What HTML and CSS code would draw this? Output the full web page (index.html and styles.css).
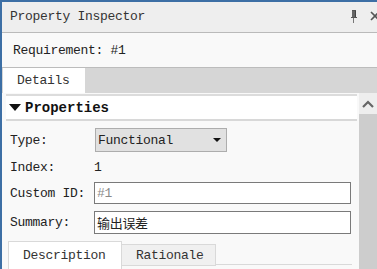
FILE: index.html
```html
<!DOCTYPE html>
<html lang="zh-CN">
<head>
    <meta charset="UTF-8">
    <title>Property Inspector</title>
    <link rel="stylesheet" href="styles.css">
</head>
<body>
    <div class="panel">
        <div class="title-bar">
            <span class="title">Property Inspector</span>
            <div class="title-tools">
                <svg class="pin" width="8" height="13" viewBox="0 0 8 13">
                    <rect x="2" y="0" width="4" height="1" fill="#555"/>
                    <rect x="2" y="1" width="3" height="6" fill="#666"/>
                    <rect x="5" y="1" width="1" height="6" fill="#444"/>
                    <rect x="1" y="7" width="6" height="1" fill="#555"/>
                    <rect x="3" y="8" width="1" height="5" fill="#777"/>
                </svg>
                <svg class="close" width="10" height="10" viewBox="0 0 10 10">
                    <path d="M1 1 L9 9 M9 1 L1 9" stroke="#555" stroke-width="1.6"/>
                </svg>
            </div>
        </div>
        <div class="req-row">Requirement: #1</div>
        <div class="tab-bar">
            <div class="tab active">Details</div>
        </div>
        <div class="body">
            <div class="main">
                <div class="section-head">
                    <span class="caret"></span>
                    <span>Properties</span>
                </div>
                <div class="form">
                    <div class="row row-type">
                        <label>Type:</label>
                        <div class="select">
                            <span>Functional</span>
                            <span class="arrow"></span>
                        </div>
                    </div>
                    <div class="row row-index">
                        <label>Index:</label>
                        <span class="value">1</span>
                    </div>
                    <div class="row row-id">
                        <label>Custom ID:</label>
                        <input class="field" type="text" placeholder="#1">
                    </div>
                    <div class="row row-summary">
                        <label>Summary:</label>
                        <input class="field" type="text" value="输出误差">
                    </div>
                </div>
                <div class="sub-tabs">
                    <div class="sub-tab active">Description</div>
                    <div class="sub-tab">Rationale</div>
                    <div class="sub-fill"></div>
                </div>
            </div>
            <div class="scrollbar">
                <div class="scroll-btn">
                    <svg width="12" height="8" viewBox="0 0 12 8">
                        <path d="M1 7 L6 2 L11 7" stroke="#666" stroke-width="2.2" fill="none"/>
                    </svg>
                </div>
                <div class="scroll-track"></div>
            </div>
        </div>
    </div>
</body>
</html>
```

FILE: styles.css
```css
* {
    margin: 0;
    padding: 0;
    box-sizing: border-box;
}

body {
    width: 377px;
    height: 269px;
    overflow: hidden;
    background: #f9f9f9;
    font-family: 'Liberation Mono', 'Noto Sans CJK SC', monospace;
    font-size: 13px;
    letter-spacing: -0.3px;
    color: #222;
}

.panel {
    height: 269px;
    display: flex;
    flex-direction: column;
    border-top: 2px solid #3d6fa5;
    border-left: 2px solid #3d6fa5;
}

.title-bar {
    height: 31px;
    flex-shrink: 0;
    display: flex;
    align-items: center;
    justify-content: space-between;
    padding-left: 8px;
    background: #eeeeee;
    border-bottom: 1px solid #bababa;
    color: #333;
}

.title {
    margin-top: -2px;
}

.title-tools {
    display: flex;
    align-items: center;
    gap: 12px;
    margin-right: -3px;
    margin-top: -2px;
}

.req-row {
    height: 35px;
    flex-shrink: 0;
    display: flex;
    align-items: center;
    padding-left: 11px;
    background: #f9f9f9;
    border-bottom: 1px solid #bcbcbc;
}

.tab-bar {
    height: 25px;
    flex-shrink: 0;
    display: flex;
    background: #d6d6d6;
}

.tab {
    width: 82px;
    margin-left: 1px;
    padding-left: 14px;
    display: flex;
    align-items: center;
    color: #333;
}

.tab.active {
    background: #ffffff;
}

.body {
    flex: 1;
    display: flex;
    min-height: 0;
}

.main {
    flex: 1;
    padding: 1px 2px 0 4px;
    display: flex;
    flex-direction: column;
}

.section-head {
    height: 29px;
    display: flex;
    align-items: center;
    gap: 4px;
    padding-left: 3px;
    background: #ffffff;
    border-top: 2px solid #dcdcdc;
    border-bottom: 2px solid #d8d8d8;
    font-size: 14px;
    font-weight: bold;
    letter-spacing: 0;
    color: #111;
}

.caret {
    width: 0;
    height: 0;
    border-left: 6px solid transparent;
    border-right: 6px solid transparent;
    border-top: 7px solid #111;
}

.form {
    padding: 7px 0 0 4px;
}

.row {
    display: flex;
    align-items: center;
}

.row label {
    width: 84px;
    flex-shrink: 0;
}

.row-type {
    height: 24px;
}

.row-index {
    height: 30px;
}

.row-id {
    height: 22px;
}

.row-summary {
    height: 23px;
    margin-top: 7px;
}

.select {
    width: 132px;
    height: 24px;
    margin-left: 1px;
    display: flex;
    align-items: center;
    justify-content: space-between;
    padding: 0 5px 0 2px;
    background: #e1e1e1;
    border: 1px solid #adadad;
}

.arrow {
    width: 0;
    height: 0;
    border-left: 4px solid transparent;
    border-right: 4px solid transparent;
    border-top: 4px solid #111;
}

.value {
    padding-left: 0;
}

.field {
    width: 257px;
    height: 100%;
    padding-left: 2px;
    border: 1px solid #7a7a7a;
    background: #ffffff;
    font: inherit;
    letter-spacing: inherit;
    color: #222;
    outline: none;
}

.field::placeholder {
    color: #8a8a8a;
}

.sub-tabs {
    display: flex;
    align-items: flex-start;
    margin-top: 7px;
    padding-left: 2px;
}

.sub-tab {
    height: 28px;
    display: flex;
    align-items: center;
    border: 1px solid #d9d9d9;
    border-bottom: none;
    color: #333;
}

.sub-tab.active {
    width: 114px;
    padding-left: 14px;
    background: #ffffff;
}

.sub-tab:not(.active) {
    width: 94px;
    height: 22px;
    margin-top: 3px;
    padding-left: 14px;
    border-left: none;
    border-bottom: 1px solid #d9d9d9;
    background: #f0f0f0;
}

.sub-fill {
    width: 136px;
    height: 24px;
    border-bottom: 1px solid #d9d9d9;
}

.scrollbar {
    width: 18px;
    flex-shrink: 0;
    display: flex;
    flex-direction: column;
}

.scroll-btn {
    height: 21px;
    display: flex;
    align-items: center;
    justify-content: center;
    background: #eeeeee;
}

.scroll-track {
    flex: 1;
    background: #cdcdcd;
}
```
